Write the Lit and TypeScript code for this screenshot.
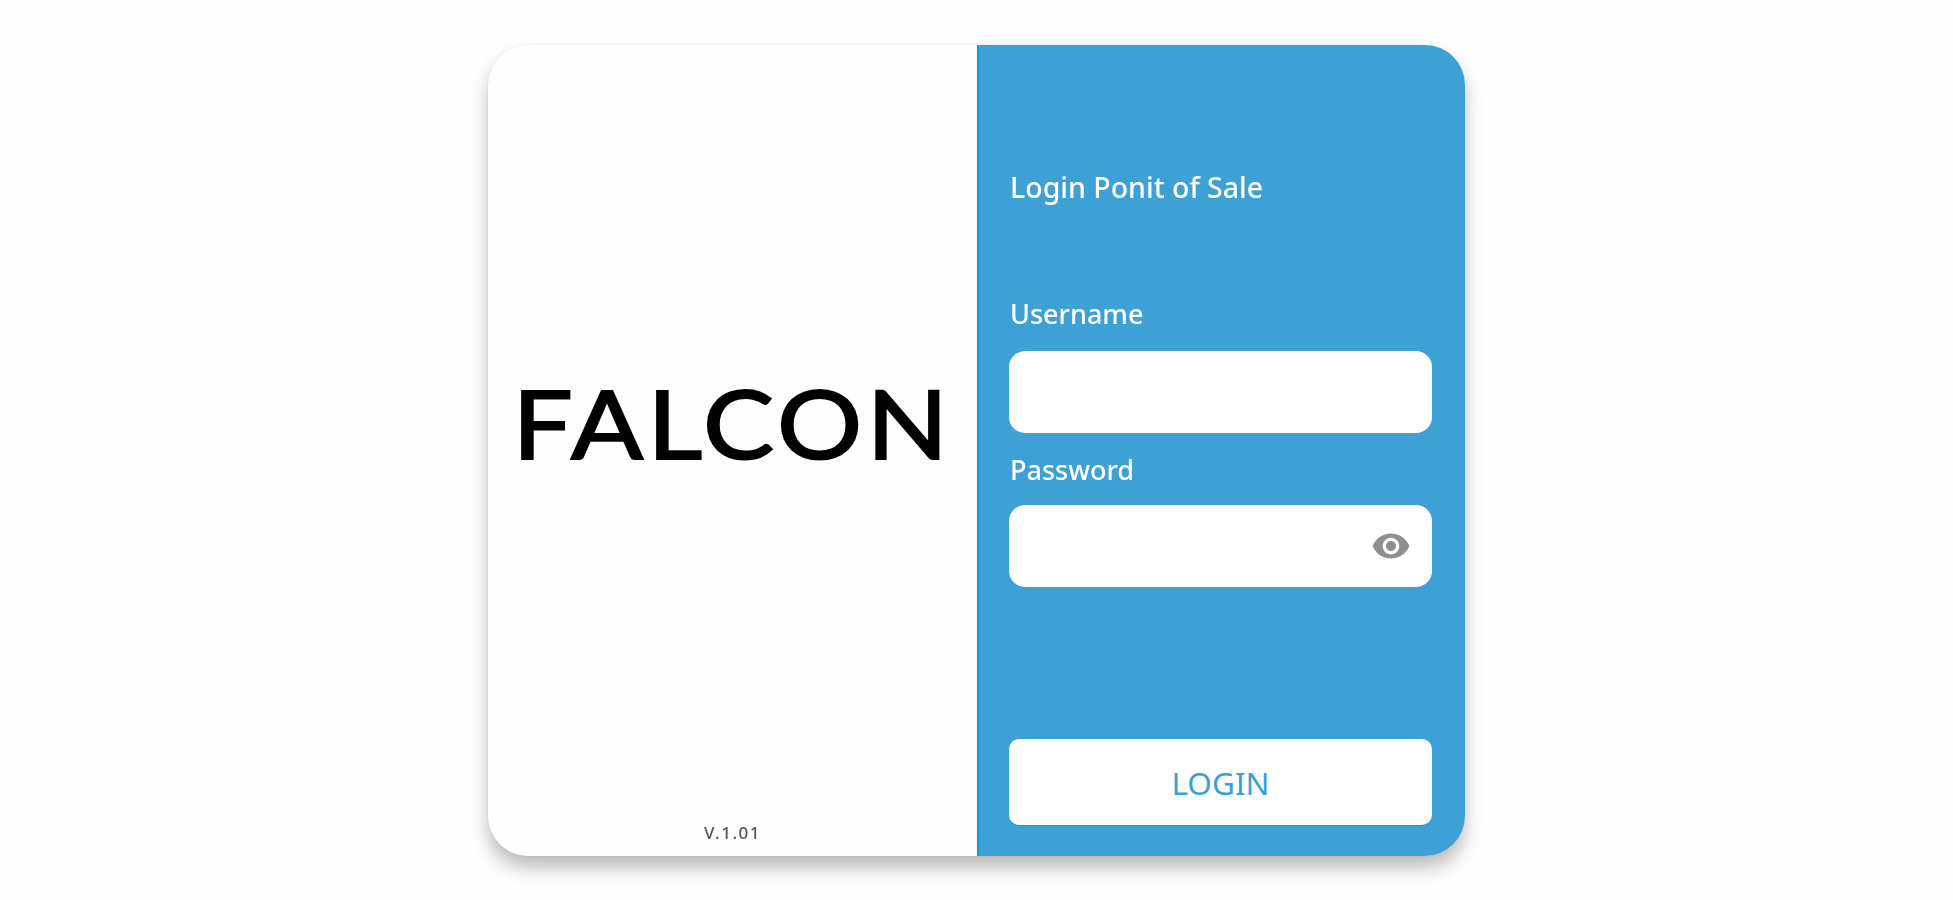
// Login card for the Falcon point of sale: logo panel on the left, form panel on the right
import { css, html, LitElement } from "lit";
import { customElement, state } from "lit/decorators.js";

@customElement("app-root")
export class AppRoot extends LitElement {
  static styles = css`
    :host {
      display: block;
      height: 900px;
      box-sizing: border-box;
      padding-top: 45px;
      background: #fefefe;
      font-family: "Noto Sans", sans-serif;
    }

    .card {
      display: flex;
      width: 977px;
      height: 811px;
      margin-left: 488px;
      border-radius: 40px;
      background: #fefefe;
      box-shadow:
        0 12px 18px rgba(0, 0, 0, 0.26),
        0 0 2px rgba(0, 0, 0, 0.08);
    }

    /* Logo side */
    .brand {
      flex: 0 0 489px;
      display: flex;
      flex-direction: column;
      align-items: center;
    }

    .logo {
      flex: 1;
      display: flex;
      align-items: center;
      padding-bottom: 22px;
      font-family: "Lato", sans-serif;
      font-size: 95px;
      letter-spacing: 4px;
      line-height: 1;
      color: #000;
      -webkit-text-stroke: 2px #000;
      transform: scaleX(1.12);
      filter: blur(0.5px);
    }

    .version {
      height: 35px;
      font-size: 17px;
      font-weight: 500;
      letter-spacing: 1.5px;
      color: #555;
      filter: blur(0.6px);
    }

    /* Form side */
    .form {
      flex: 1;
      display: flex;
      flex-direction: column;
      box-sizing: border-box;
      padding: 0 33px 31px 30px;
      border-left: 2px solid #1d98d3;
      border-radius: 0 40px 40px 0;
      background: #3ea1d6;
      color: #fff;
    }

    .title {
      margin: 122px 0 0 1px;
      font-size: 28.5px;
      font-weight: 500;
      line-height: 40px;
      filter: blur(0.4px);
    }

    .label {
      margin-left: 1px;
      font-size: 27px;
      font-weight: 500;
      line-height: 40px;
      filter: blur(0.4px);
    }

    .username-label {
      margin-top: 87px;
      margin-bottom: 17px;
    }

    .password-label {
      margin-top: 17px;
      margin-bottom: 15px;
    }

    .field {
      display: flex;
      align-items: center;
      height: 82px;
      padding: 0 21px 0 16px;
      box-sizing: border-box;
      border-radius: 16px;
      background: #fff;
    }

    .field input {
      flex: 1;
      min-width: 0;
      border: none;
      outline: none;
      background: transparent;
      font: inherit;
    }

    .eye {
      width: 40px;
      height: 40px;
      fill: #8f8f8f;
      cursor: pointer;
    }

    .login {
      margin-top: auto;
      height: 86px;
      border: none;
      border-radius: 10px;
      background: #fff;
      box-shadow: 0 1px 0 #1d98d3;
      color: #3a9fd6;
      font-family: inherit;
      font-size: 31.5px;
      cursor: pointer;
    }
  `;

  @state()
  private _showPassword = false;

  private togglePassword() {
    this._showPassword = !this._showPassword;
  }

  render() {
    return html`
      <div class="card">
        <div class="brand">
          <div class="logo">FALCON</div>
          <div class="version">V.1.01</div>
        </div>
        <div class="form">
          <div class="title">Login Ponit of Sale</div>
          <div class="label username-label">Username</div>
          <div class="field"><input type="text" /></div>
          <div class="label password-label">Password</div>
          <div class="field">
            <input type=${this._showPassword ? "text" : "password"} />
            <svg class="eye" viewBox="0 0 24 24" @click=${this.togglePassword}>
              <path
                d="M12 4.5C7 4.5 2.73 7.61 1 12c1.73 4.39 6 7.5 11 7.5s9.27-3.11 11-7.5c-1.73-4.39-6-7.5-11-7.5zM12 17c-2.76 0-5-2.24-5-5s2.24-5 5-5 5 2.24 5 5-2.24 5-5 5zm0-8c-1.66 0-3 1.34-3 3s1.34 3 3 3 3-1.34 3-3-1.34-3-3-3z"
              />
            </svg>
          </div>
          <button class="login">LOGIN</button>
        </div>
      </div>
    `;
  }
}
